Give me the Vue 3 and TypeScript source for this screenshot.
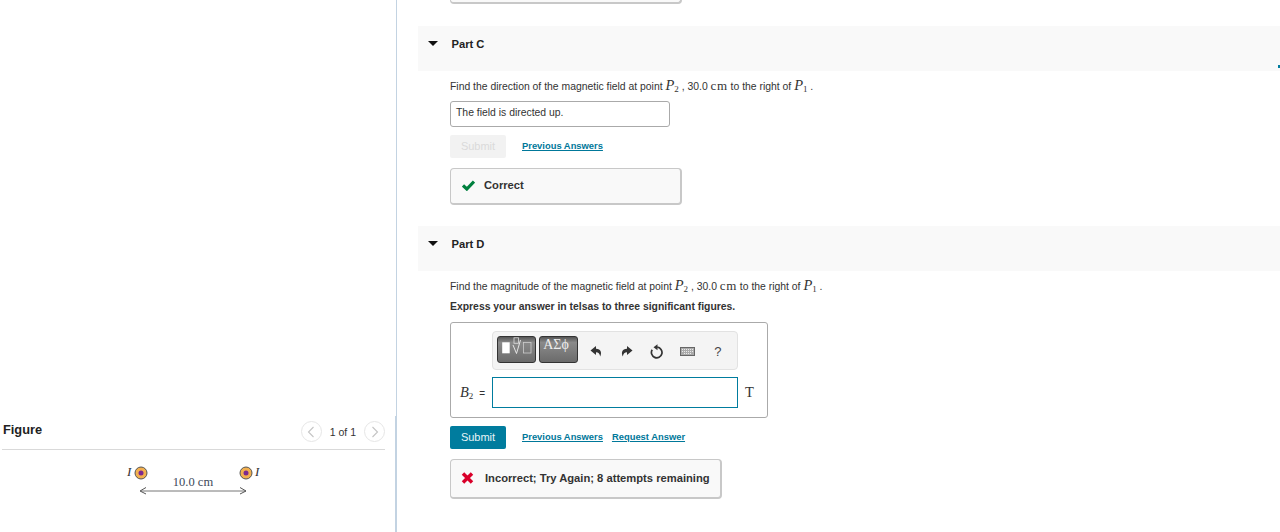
<script setup lang="ts">
const tools = ['undo', 'redo', 'reset', 'keyboard', 'help']
</script>

<template>
  <div class="page">
    <aside class="left">
      <div class="figure-head">
        <strong class="figure-title">Figure</strong>
        <div class="pager">
          <span class="round"><svg width="8" height="12" viewBox="0 0 8 12"><path d="M6.5 1 1.5 6l5 5" fill="none" stroke="#c4c4c4" stroke-width="1.1"/></svg></span>
          <span class="pager-text">1 of 1</span>
          <span class="round"><svg width="8" height="12" viewBox="0 0 8 12"><path d="M1.5 1l5 5-5 5" fill="none" stroke="#c4c4c4" stroke-width="1.1"/></svg></span>
        </div>
      </div>
      <div class="figure">
        <svg width="140" height="40" viewBox="0 0 140 40">
          <text x="7" y="16" class="fig-i">I</text>
          <circle cx="21" cy="13" r="6" fill="#f3b04f" stroke="#555" stroke-width="1"/>
          <circle cx="21" cy="13" r="2.5" fill="#7d2a8f"/>
          <circle cx="126" cy="13" r="6" fill="#f3b04f" stroke="#555" stroke-width="1"/>
          <circle cx="126" cy="13" r="2.5" fill="#7d2a8f"/>
          <text x="135" y="16" class="fig-i">I</text>
          <text x="73" y="26" text-anchor="middle" class="fig-t">10.0 cm</text>
          <path d="M21 31H126" stroke="#777" stroke-width="1"/>
          <path d="M26 27.500 20 31l6 3M120 27.500l6 3.500-6 3" fill="none" stroke="#555" stroke-width="1"/>
        </svg>
      </div>
    </aside>

    <main class="right">
      <div class="stub"></div>

      <section class="part part-c">
        <header class="part-head">
          <span class="caret"></span>
          <strong>Part C</strong>
        </header>
        <div class="body">
          <p class="q">Find the direction of the magnetic field at point <span class="m"><i>P</i><sub>2</sub></span> , 30.0 <span class="m cm">cm</span> to the right of <span class="m"><i>P</i><sub>1</sub></span> .</p>
          <div class="answer">The field is directed up.</div>
          <div class="actions">
            <span class="submit disabled">Submit</span>
            <a class="link">Previous Answers</a>
          </div>
          <div class="feedback correct">
            <svg width="13" height="11" viewBox="0 0 13 11"><path d="M1 5.500 4.800 9 12 1.500" fill="none" stroke="#00803e" stroke-width="3.200"/></svg>
            <strong>Correct</strong>
          </div>
        </div>
      </section>

      <section class="part part-d">
        <header class="part-head">
          <span class="caret"></span>
          <strong>Part D</strong>
        </header>
        <div class="body">
          <p class="q">Find the magnitude of the magnetic field at point <span class="m"><i>P</i><sub>2</sub></span> , 30.0 <span class="m cm">cm</span> to the right of <span class="m"><i>P</i><sub>1</sub></span> .</p>
          <p class="express">Express your answer in telsas to three significant figures.</p>
          <div class="editor">
            <div class="toolbar">
              <span class="tbtn t1">
                <svg width="36" height="24" viewBox="0 0 36 24">
                  <rect x="3.200" y="5.300" width="7.500" height="11" fill="#fff"/>
                  <rect x="15" y=".8" width="4.500" height="5.500" fill="none" stroke="#ddd" stroke-width=".8"/>
                  <path d="M14 8l3.500 8.500 4-13.500" fill="none" stroke="#eee" stroke-width=".9"/>
                  <rect x="24.500" y="5.500" width="7.500" height="10.500" fill="none" stroke="#ccc" stroke-width=".8"/>
                </svg>
              </span>
              <span class="tbtn t2">ΑΣϕ</span>
              <span class="tools">
                <span v-for="t in tools" :key="t" class="tool">
                  <svg v-if="t === 'undo'" width="13" height="13" viewBox="0 0 13 13"><path d="M6 1 .5 5.500 6 10V7.200c2.500 0 3.500 1.300 4.200 4.300C12 8 11 3.800 6 3.800z" fill="#333"/></svg>
                  <svg v-else-if="t === 'redo'" width="13" height="13" viewBox="0 0 13 13"><path d="M7 1l5.500 4.500L7 10V7.200c-2.500 0-3.500 1.300-4.200 4.300C1 8 2 3.800 7 3.800z" fill="#333"/></svg>
                  <svg v-else-if="t === 'reset'" width="15" height="15" viewBox="0 0 15 15"><path d="M8.200 3.200a5.300 5.300 0 1 1-5 2.500" fill="none" stroke="#333" stroke-width="1.700"/><path d="M8.500.2v6L4.500 3.200z" fill="#333"/></svg>
                  <svg v-else-if="t === 'keyboard'" width="15" height="9" viewBox="0 0 15 9"><rect x=".5" y=".5" width="14" height="8" fill="#aaa" stroke="#666"/><path d="M2 2.500h11M2 4.500h11M4 6.500h7" stroke="#f0f0f0" stroke-width=".9" stroke-dasharray="1 1"/></svg>
                  <span v-else class="help">?</span>
                </span>
              </span>
            </div>
            <div class="entry">
              <span class="label"><span class="m lg"><i>B</i><sub>2</sub></span><span class="eq">=</span></span>
              <div class="input"></div>
              <span class="unit">T</span>
            </div>
          </div>
          <div class="actions act2">
            <span class="submit">Submit</span>
            <a class="link">Previous Answers</a>
            <a class="link second">Request Answer</a>
          </div>
          <div class="feedback wrong">
            <svg width="13" height="12" viewBox="0 0 13 12"><path d="M2 1.500 11 10.500M11 1.500 2 10.500" fill="none" stroke="#d9002a" stroke-width="3.500"/></svg>
            <strong>Incorrect; Try Again; 8 attempts remaining</strong>
          </div>
        </div>
      </section>
      <span class="edge"></span>
    </main>
  </div>
</template>

<style>
html, body { margin: 0; background: #fff; }
</style>

<style scoped>
.page { display: flex; width: 1280px; height: 532px; overflow: hidden; font-family: "Liberation Sans", Arial, sans-serif; color: #222; }
.left { position: relative; width: 397px; box-sizing: border-box; border-right: 1px solid #c3d3e2; display: flex; flex-direction: column; justify-content: flex-start; padding: 417px 11px 0 2px; flex: none; }
.left::after { content: ""; position: absolute; right: 0; top: 416px; bottom: 0; width: 1px; background: #c3d3e2; }
.figure-head { display: flex; justify-content: space-between; align-items: center; height: 32px; border-bottom: 1px solid #d9d9d9; }
.figure-title { font-size: 12.800px; line-height: 25px; margin-top: -7px; margin-left: 1px; }
.pager { display: flex; align-items: center; gap: 8px; margin-top: -3px; }
.pager-text { font-size: 10.500px; color: #333; }
.round { width: 19px; height: 19px; border: 1px solid #e6e6e6; border-radius: 50%; display: flex; align-items: center; justify-content: center; }
.figure { padding: 10px 0 0 118px; }
.figure svg { display: block; }
.fig-i { font: italic 13px "Liberation Serif", serif; fill: #333; }
.fig-t { font: 12.500px "Liberation Serif", serif; fill: #3c4a5a; }
.right { position: relative; flex: 1; padding-left: 21px; min-width: 0; }
.stub { width: 232px; height: 4px; margin-left: 32px; box-sizing: border-box; border: 1px solid #c8c8c8; border-top: none; border-bottom-width: 2px; border-right-width: 2px; border-radius: 0 0 4px 4px; background: #f9f9f9; }
.part { display: block; }
.part-c { margin-top: 22px; }
.part-d { margin-top: 21px; }
.part-head { height: 45px; background: #f9f9f9; display: flex; align-items: center; padding-bottom: 10px; box-sizing: border-box; font-size: 11.200px; }
.part-head strong { margin-left: 13.500px; color: #222; }
.caret { width: 0; height: 0; margin-left: 10px; border-left: 5px solid transparent; border-right: 5px solid transparent; border-top: 5px solid #111; }
.body { padding-left: 32px; }
.q { margin: 0; padding-top: 6px; font-size: 10.400px; line-height: 16px; height: 17px; white-space: nowrap; color: #333; }
.m { font-family: "Liberation Serif", serif; font-size: 14.500px; }
.m sub { font-size: 9px; line-height: 0; vertical-align: -2px; }
.cm { letter-spacing: .6px; font-size: 13px; }
.answer { margin-top: 7px; width: 220px; height: 26px; box-sizing: border-box; border: 1px solid #aaa; border-radius: 3px; padding-left: 5px; font-size: 10.400px; line-height: 22px; color: #333; }
.actions { display: flex; align-items: center; margin-top: 8px; height: 22px; }
.submit { width: 56px; height: 23px; background: #007c9e; color: #e8f4f7; font-size: 11px; line-height: 23px; text-align: center; border-radius: 2px; }
.submit.disabled { background: #f2f2f2; color: #dadada; }
.link { margin-left: 16px; padding-bottom: 2px; font-size: 9.400px; font-weight: bold; color: #00789a; text-decoration: underline; }
.link.second { margin-left: 9px; }
.feedback { display: flex; align-items: center; margin-top: 11px; height: 37px; box-sizing: border-box; border: 1px solid #c8c8c8; border-bottom-width: 2px; border-right-width: 2px; border-radius: 4px; background: #f9f9f9; padding: 0 0 2px 10px; font-size: 11.200px; color: #333; }
.correct { width: 232px; gap: 9px; padding-left: 11px; }
.wrong { width: 272px; gap: 11px; margin-top: 10px; height: 40px; }
.express { margin: 5px 0 0; font-size: 10.400px; font-weight: bold; line-height: 16px; color: #333; }
.editor { margin-top: 7px; width: 318px; height: 96px; box-sizing: border-box; border: 1px solid #aaa; border-radius: 3px; position: relative; padding: 8px 0 0 41px; }
.toolbar { width: 246px; height: 39px; box-sizing: border-box; background: #f4f4f4; border: 1px solid #e2e2e2; border-radius: 4px; display: flex; padding: 4px 0 0 4px; gap: 3px; }
.tbtn { height: 27px; box-sizing: border-box; border: 1px solid #333; border-radius: 3px; background: linear-gradient(#555, #8a8a8a 22%, #6b6b6b); color: #eee; font: 14px/15px "Liberation Serif", serif; text-align: center; flex: none; }
.t1 { width: 39px; }
.t1 svg { display: block; margin: 0 auto; }
.t2 { width: 39px; padding-right: 5px; }
.tools { display: flex; align-items: center; height: 31px; }
.tool { width: 30.400px; display: flex; justify-content: center; }
.help { font-size: 13px; color: #444; }
.entry { display: flex; align-items: center; margin-top: 7px; margin-left: -41px; }
.label { width: 41px; box-sizing: border-box; padding-left: 9px; font-size: 10px; white-space: nowrap; color: #333; }
.lg { font-size: 14.500px; }
.eq { margin-left: 6px; }
.input { width: 246px; height: 31px; box-sizing: border-box; border: 1px solid #007c9e; flex: none; }
.unit { margin-left: 7px; font: 14.500px "Liberation Serif", serif; color: #333; }
.act2 { margin-top: 8px; height: 23px; }
.edge { position: absolute; right: 0; top: 65px; width: 2px; height: 3px; background: #007c9e; }
</style>
